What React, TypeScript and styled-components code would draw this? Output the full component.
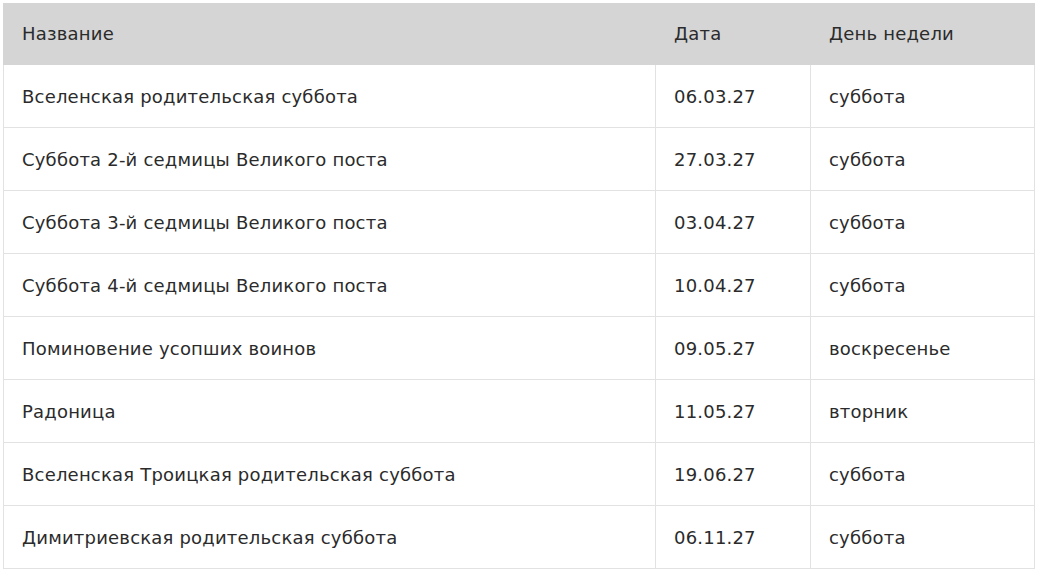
import React from "react";
import styled, { createGlobalStyle } from "styled-components";

const Global = createGlobalStyle`
  html, body { margin: 0; padding: 0; background: #fff; }
  body { font-family: "DejaVu Sans", "Open Sans", sans-serif; }
`;

const Wrap = styled.div`
  padding: 3px 3px 0 3px;
`;

const Table = styled.table`
  width: 1031px;
  border-collapse: collapse;
  table-layout: fixed;
  font-size: 18px;
  letter-spacing: 0.2px;
  color: #2b2b2b;
`;

const Th = styled.th<{ $w: number }>`
  width: ${(p) => p.$w}px;
  height: 61px;
  background: #d5d5d5;
  text-align: left;
  font-weight: 400;
  padding: 0 18px 2px;
  border: 1px solid #d5d5d5;
  box-sizing: border-box;
`;

const Td = styled.td`
  height: 63px;
  padding: 0 18px 0;
  border: 1px solid #e2e2e2;
  box-sizing: border-box;
`;

const rows: [string, string, string][] = [
  ["Вселенская родительская суббота", "06.03.27", "суббота"],
  ["Суббота 2-й седмицы Великого поста", "27.03.27", "суббота"],
  ["Суббота 3-й седмицы Великого поста", "03.04.27", "суббота"],
  ["Суббота 4-й седмицы Великого поста", "10.04.27", "суббота"],
  ["Поминовение усопших воинов", "09.05.27", "воскресенье"],
  ["Радоница", "11.05.27", "вторник"],
  ["Вселенская Троицкая родительская суббота", "19.06.27", "суббота"],
  ["Димитриевская родительская суббота", "06.11.27", "суббота"],
];

export default function App() {
  return (
    <Wrap>
      <Global />
      <Table>
        <thead>
          <tr>
            <Th $w={652}>Название</Th>
            <Th $w={155}>Дата</Th>
            <Th $w={224}>День недели</Th>
          </tr>
        </thead>
        <tbody>
          {rows.map((r) => (
            <tr key={r[0]}>
              <Td>{r[0]}</Td>
              <Td>{r[1]}</Td>
              <Td>{r[2]}</Td>
            </tr>
          ))}
        </tbody>
      </Table>
    </Wrap>
  );
}
